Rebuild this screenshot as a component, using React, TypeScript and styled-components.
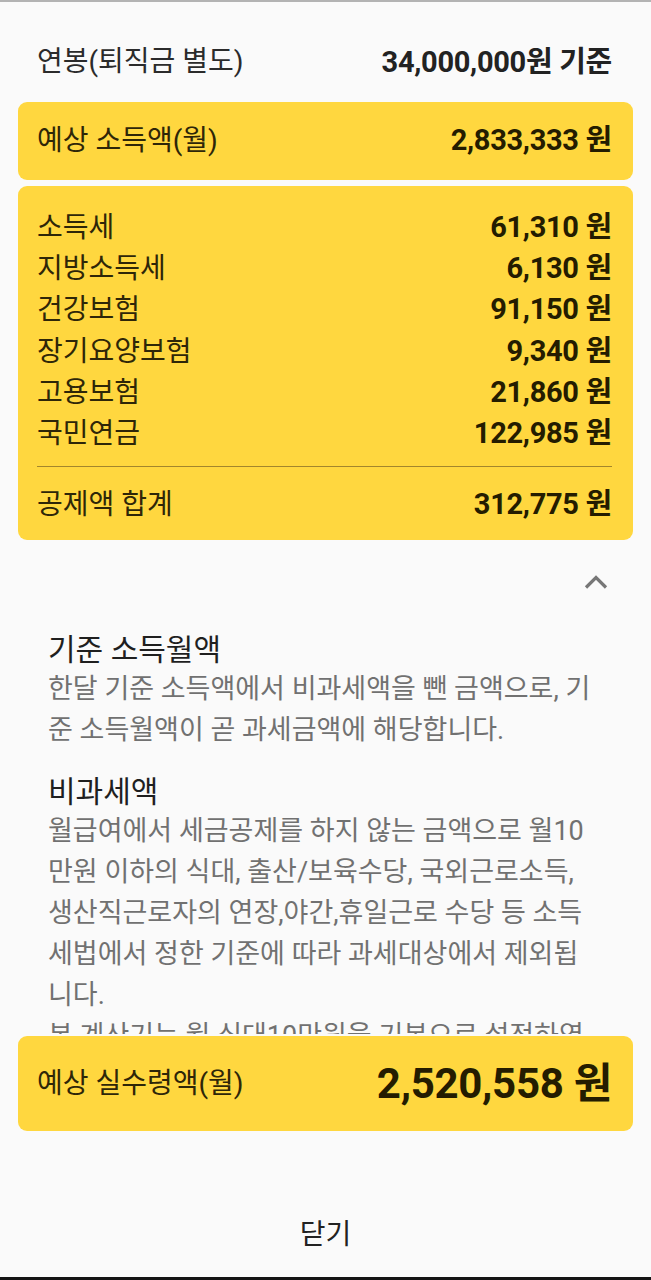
import React from "react";
import styled, { createGlobalStyle } from "styled-components";

const Global = createGlobalStyle`
  * { box-sizing: border-box; }
  html, body { margin: 0; padding: 0; background: #fafafa; }
  body { font-family: Roboto, "Noto Sans CJK KR", sans-serif; }
`;

const Screen = styled.div`
  height: 1280px;
  display: flex;
  flex-direction: column;
  background: #fafafa;
  border-top: 2px solid #b3b3b3;
  border-bottom: 3px solid #141414;
  overflow: hidden;
`;

const Header = styled.div`
  display: flex;
  justify-content: space-between;
  align-items: center;
  height: 96px;
  padding: 42px 39px 18px 37px;
  margin-bottom: 4px;
`;

const HeaderLabel = styled.span`
  font-size: 28px;
  color: #2b2b2b;
  line-height: 36px;
`;

const HeaderValue = styled.span`
  font-size: 29px;
  font-weight: 700;
  color: #222;
  line-height: 36px;
  letter-spacing: -0.3px;
`;

const Card = styled.div<{ $height?: number; $pad?: string; $gap?: number; $top?: number }>`
  margin: ${(p) => p.$top ?? 0}px 18px ${(p) => p.$gap ?? 0}px;
  background: #ffd73f;
  border-radius: 9px;
  padding: ${(p) => p.$pad ?? "0 21px 0 19px"};
  ${(p) => (p.$height ? `height: ${p.$height}px;` : "")}
  display: flex;
  flex-direction: column;
  justify-content: center;
  flex-shrink: 0;
`;

const Row = styled.div<{ $lh?: number }>`
  display: flex;
  justify-content: space-between;
  align-items: center;
  line-height: ${(p) => p.$lh ?? 41.2}px;
`;

const Label = styled.span<{ $size?: number }>`
  font-size: ${(p) => p.$size ?? 28}px;
  color: #2e2608;
`;

const Value = styled.span<{ $size?: number }>`
  font-size: ${(p) => p.$size ?? 29}px;
  font-weight: 700;
  color: #241c00;
  letter-spacing: -0.3px;
`;

const Divider = styled.div`
  height: 1px;
  background: #a3862c;
  margin: 12px 0 17px;
`;

const ChevronRow = styled.div`
  display: flex;
  justify-content: flex-end;
  align-items: center;
  height: 40px;
  margin-top: 22px;
  padding-right: 43px;
  flex-shrink: 0;
`;

const Description = styled.div`
  flex: 1;
  min-height: 0;
  overflow: hidden;
  padding: 28px 20px 0 48px;
`;

const Section = styled.section`
  & + & { margin-top: 21px; }
`;

const Title = styled.h3`
  margin: 0;
  font-size: 30px;
  font-weight: 400;
  line-height: 39px;
  color: #1f1f1f;
`;

const Body = styled.p`
  margin: 0;
  font-size: 27px;
  line-height: 41px;
  color: #717171;
  white-space: nowrap;
`;

const Footer = styled.div`
  height: 146px;
  flex-shrink: 0;
  display: flex;
  justify-content: center;
  padding-top: 84px;
`;

const CloseButton = styled.button`
  border: none;
  background: none;
  padding: 0;
  height: 40px;
  font-family: Roboto, "Noto Sans CJK KR", sans-serif;
  font-size: 28px;
  color: #222;
  line-height: 40px;
  cursor: pointer;
`;

const rows: [string, string][] = [
  ["소득세", "61,310 원"],
  ["지방소득세", "6,130 원"],
  ["건강보험", "91,150 원"],
  ["장기요양보험", "9,340 원"],
  ["고용보험", "21,860 원"],
  ["국민연금", "122,985 원"],
];

export default function App() {
  return (
    <>
      <Global />
      <Screen>
        <Header>
          <HeaderLabel>연봉(퇴직금 별도)</HeaderLabel>
          <HeaderValue>34,000,000원 기준</HeaderValue>
        </Header>

        <Card $height={78} $gap={6}>
          <Row>
            <Label>예상 소득액(월)</Label>
            <Value>2,833,333 원</Value>
          </Row>
        </Card>

        <Card $pad="21px 21px 15px 19px">
          {rows.map(([k, v]) => (
            <Row key={k}>
              <Label>{k}</Label>
              <Value>{v}</Value>
            </Row>
          ))}
          <Divider />
          <Row>
            <Label>공제액 합계</Label>
            <Value>312,775 원</Value>
          </Row>
        </Card>

        <ChevronRow>
          <svg width="24" height="16" viewBox="0 0 24 16" aria-hidden="true">
            <polyline
              points="2,13.5 12,3.5 22,13.5"
              fill="none"
              stroke="#777"
              strokeWidth="3.2"
            />
          </svg>
        </ChevronRow>

        <Description>
          <Section>
            <Title>기준 소득월액</Title>
            <Body>
              한달 기준 소득액에서 비과세액을 뺀 금액으로, 기
              <br />준 소득월액이 곧 과세금액에 해당합니다.
            </Body>
          </Section>
          <Section>
            <Title>비과세액</Title>
            <Body>
              월급여에서 세금공제를 하지 않는 금액으로 월10
              <br />
              만원 이하의 식대, 출산/보육수당, 국외근로소득,
              <br />
              생산직근로자의 연장,야간,휴일근로 수당 등 소득
              <br />
              세법에서 정한 기준에 따라 과세대상에서 제외됩
              <br />
              니다.
              <br />
              본 계산기는 월 식대10만원을 기본으로 설정하였
            </Body>
          </Section>
        </Description>

        <Card $height={95} $top={2}>
          <Row>
            <Label>예상 실수령액(월)</Label>
            <Value $size={42}>2,520,558 원</Value>
          </Row>
        </Card>

        <Footer>
          <CloseButton>닫기</CloseButton>
        </Footer>
      </Screen>
    </>
  );
}
